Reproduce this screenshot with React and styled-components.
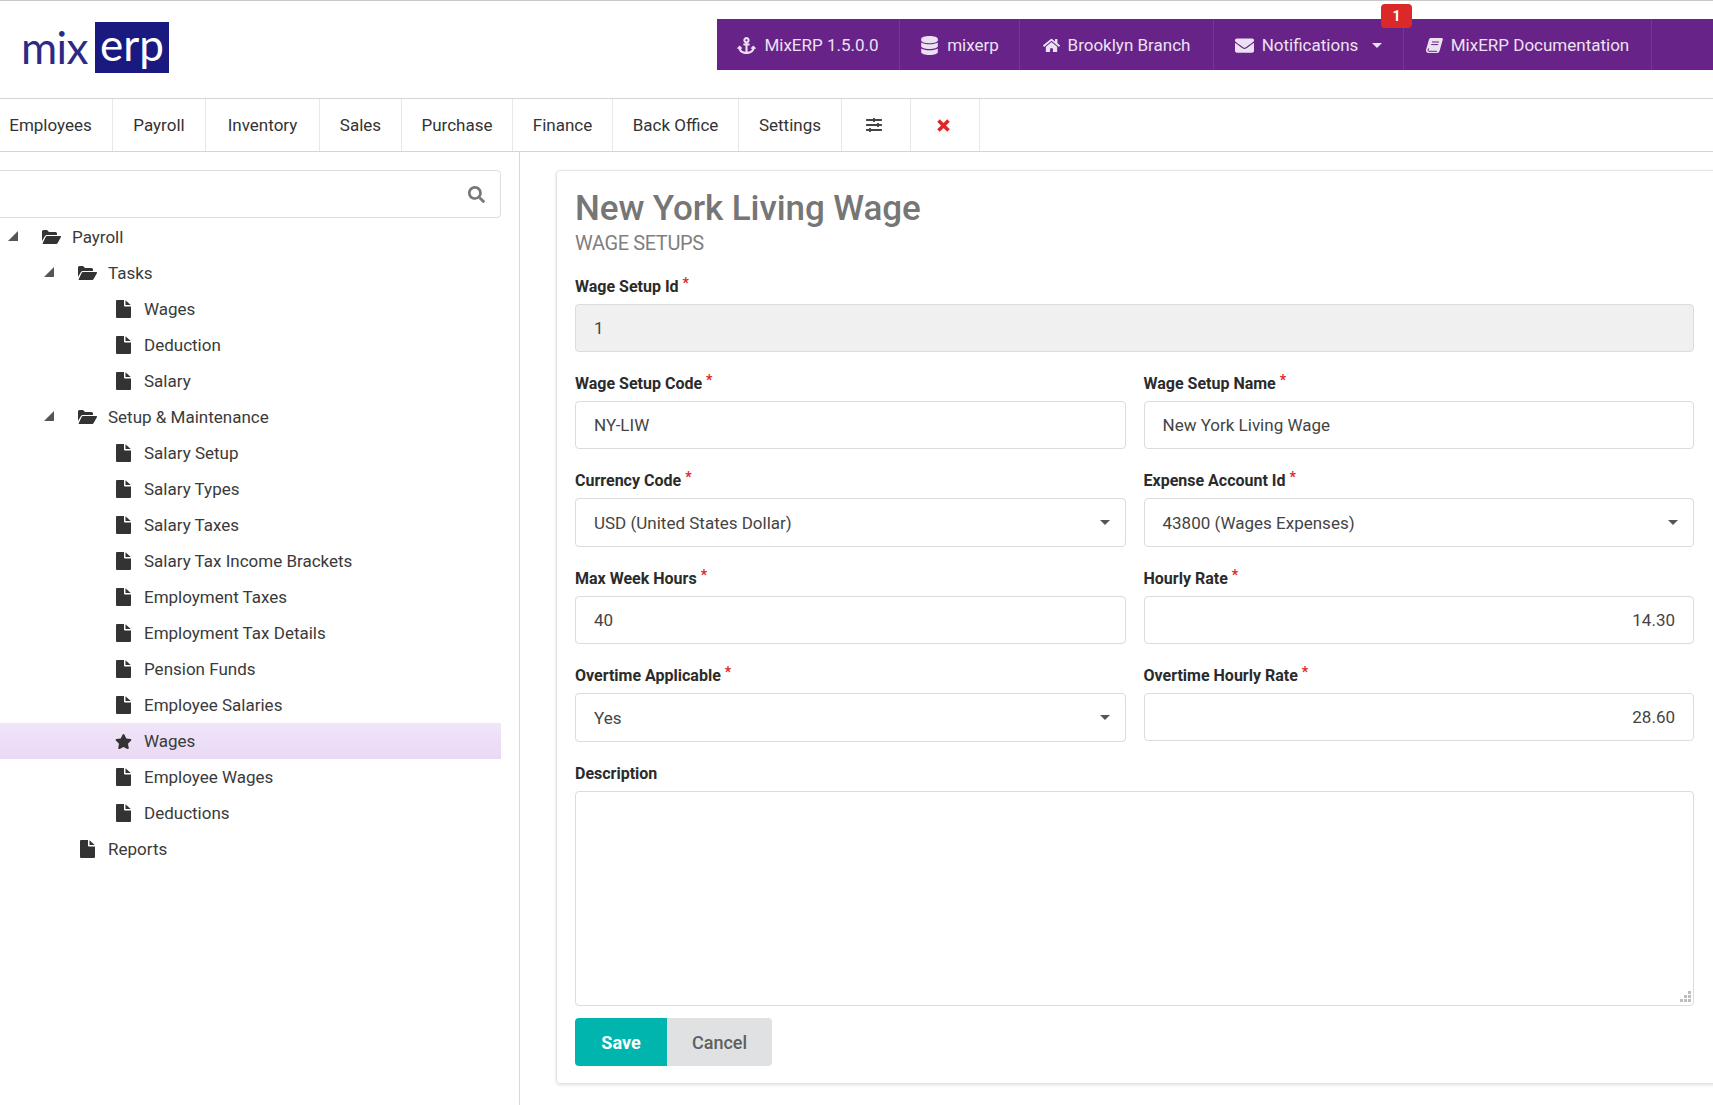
import React from "react";
import styled, { createGlobalStyle } from "styled-components";
import {
  FaAnchor,
  FaDatabase,
  FaHome,
  FaEnvelope,
  FaStar,
  FaSearch,
  FaSlidersH,
} from "react-icons/fa";

const GlobalStyle = createGlobalStyle`
  html, body {
    margin: 0;
    padding: 0;
    background: #fff;
    overflow: hidden;
  }
  * {
    box-sizing: border-box;
  }
  body {
    font-family: Roboto, "Noto Sans", sans-serif;
    font-size: 17px;
    color: #333;
  }
`;

const Page = styled.div`
  width: 1713px;
  height: 1105px;
  overflow: hidden;
  display: flex;
  flex-direction: column;
`;

const Header = styled.header`
  height: 99px;
  flex: none;
  border-top: 1px solid #c8c8c8;
  border-bottom: 1px solid #d4d4d5;
  display: flex;
  justify-content: space-between;
  align-items: flex-start;
`;

const Logo = styled.div`
  display: flex;
  align-items: center;
  margin: 21px 0 0 21px;
  font-family: Lato, "Liberation Sans", sans-serif;
  font-size: 44px;
  line-height: 51px;
`;

const LogoMix = styled.span`
  color: #2b2b85;
  width: 74px;
  letter-spacing: -0.6px;
`;

const LogoErp = styled.span`
  background: #191980;
  color: #fff;
  width: 74px;
  height: 51px;
  text-align: center;
  line-height: 44px;
`;

const TopNav = styled.nav`
  width: 996px;
  height: 51px;
  margin-top: 18px;
  background: #672388;
  display: flex;
`;

const TopItem = styled.div`
  position: relative;
  width: ${(p) => p.$w}px;
  flex: none;
  display: flex;
  align-items: center;
  justify-content: center;
  gap: 8px;
  padding-top: 1px;
  color: #ece1f2;
  font-size: 17px;
  border-right: 1px solid #76388f;
  svg {
    flex: none;
  }
`;

const Caret = styled.span`
  width: 0;
  height: 0;
  margin-left: 6px;
  border-left: 5px solid transparent;
  border-right: 5px solid transparent;
  border-top: 5px solid ${(p) => p.$color || "#ece1f2"};
`;

const Badge = styled.span`
  position: absolute;
  top: -15px;
  left: 167px;
  width: 31px;
  height: 24px;
  background: #db2828;
  border-radius: 4px;
  color: #fff;
  font-size: 14px;
  font-weight: 700;
  display: flex;
  align-items: center;
  justify-content: center;
`;

const MainMenu = styled.nav`
  height: 53px;
  flex: none;
  margin-left: -11px;
  border-bottom: 1px solid #d4d4d5;
  display: flex;
`;

const MenuItem = styled.div`
  width: ${(p) => p.$w}px;
  flex: none;
  display: flex;
  align-items: center;
  justify-content: center;
  padding-right: ${(p) => (p.$icon ? 4 : 0)}px;
  border-right: 1px solid #e8e8e8;
  color: #333;
  font-size: 17px;
  svg {
    font-size: 16px;
    color: #444;
  }
`;

const Body = styled.div`
  flex: 1;
  display: flex;
  min-height: 0;
`;

const Sidebar = styled.aside`
  width: 520px;
  flex: none;
  border-right: 1px solid #d9d9d9;
  padding: 18px 18px 0 0;
`;

const SearchBox = styled.div`
  height: 48px;
  margin-left: -20px;
  border: 1px solid #dedede;
  border-radius: 4px;
  display: flex;
  align-items: center;
  justify-content: flex-end;
  padding-right: 15px;
  color: #777;
  svg {
    font-size: 17px;
  }
`;

const Tree = styled.div`
  margin-top: 1px;
`;

const Row = styled.div`
  height: 36px;
  display: flex;
  align-items: center;
  padding-left: ${(p) => p.$indent}px;
  color: #3a3a3a;
  background: ${(p) =>
    p.$active ? "linear-gradient(#f0e5f8, #ead9f5)" : "transparent"};
`;

const Toggle = styled.svg`
  width: 10px;
  height: 10px;
  flex: none;
  margin: -3px 23px 0 0;
  fill: #555;
`;

const RowIcon = styled.span`
  width: 20px;
  margin-right: 11px;
  flex: none;
  display: flex;
  justify-content: center;
  color: #333;
  font-size: 17px;
  svg {
    display: block;
    fill: #333;
  }
`;

const Main = styled.main`
  flex: 1;
  min-width: 0;
  padding: 18px 0 0 36px;
`;

const Card = styled.section`
  width: 1170px;
  height: 914px;
  border: 1px solid #e4e4e5;
  border-radius: 4px;
  box-shadow: 0 1px 3px rgba(34, 36, 38, 0.15);
  padding: 18px 31px 0 18px;
  display: flex;
  flex-direction: column;
`;

const Title = styled.h1`
  margin: 0 0 2px;
  font-size: 35px;
  line-height: 40px;
  font-weight: 500;
  letter-spacing: -0.1px;
  color: #767676;
`;

const Subtitle = styled.div`
  font-size: 20px;
  line-height: 24px;
  letter-spacing: -0.4px;
  color: #7f7f7f;
  margin-bottom: 20px;
`;

const FormGrid = styled.div`
  display: grid;
  grid-template-columns: 1fr 1fr;
  column-gap: 18px;
  row-gap: 20px;
`;

const Field = styled.div`
  grid-column: ${(p) => (p.$wide ? "1 / -1" : "auto")};
  position: relative;
`;

const Label = styled.label`
  display: block;
  height: 22px;
  margin-bottom: 7px;
  font-size: 16px;
  line-height: 23px;
  font-weight: 700;
  color: #2b2b2b;
`;

const Required = styled.span`
  color: #db2828;
  font-size: 14px;
  margin-left: 4px;
  position: relative;
  top: -4px;
`;

const Input = styled.input`
  display: block;
  width: 100%;
  height: 48px;
  padding: 0 18px;
  border: 1px solid #dcdcdd;
  border-radius: 4px;
  font: inherit;
  font-size: 17px;
  color: #444;
  outline: none;
  text-align: ${(p) => (p.$right ? "right" : "left")};
  background: ${(p) => (p.readOnly ? "#f0f0f0" : "#fff")};
`;

const Select = styled.div`
  height: 49px;
  padding: 0 15px 0 18px;
  border: 1px solid #dcdcdd;
  border-radius: 4px;
  display: flex;
  align-items: center;
  justify-content: space-between;
  font-size: 17px;
  color: #444;
`;

const TextArea = styled.textarea`
  display: block;
  width: 100%;
  height: 215px;
  border: 1px solid #dcdcdd;
  border-radius: 4px;
  resize: none;
  outline: none;
`;

const Grip = styled.svg`
  position: absolute;
  right: 3px;
  bottom: 3px;
  width: 12px;
  height: 12px;
  fill: #bdbdbd;
`;

const Buttons = styled.div`
  display: flex;
  margin-top: 12px;
`;

const Button = styled.button`
  width: ${(p) => (p.$primary ? 92 : 105)}px;
  height: 48px;
  border: 0;
  font: inherit;
  font-size: 18px;
  font-weight: ${(p) => (p.$primary ? 700 : 500)};
  color: ${(p) => (p.$primary ? "#fff" : "#5f5f60")};
  background: ${(p) => (p.$primary ? "#00b5ad" : "#e0e1e2")};
  border-radius: ${(p) => (p.$primary ? "4px 0 0 4px" : "0 4px 4px 0")};
`;

const tabs = [
  ["Employees", 124],
  ["Payroll", 93],
  ["Inventory", 114],
  ["Sales", 82],
  ["Purchase", 111],
  ["Finance", 100],
  ["Back Office", 126],
  ["Settings", 103],
];

const tree = [
  { name: "Payroll", indent: 8, open: true },
  { name: "Tasks", indent: 44, open: true },
  { name: "Wages", indent: 113 },
  { name: "Deduction", indent: 113 },
  { name: "Salary", indent: 113 },
  { name: "Setup & Maintenance", indent: 44, open: true },
  { name: "Salary Setup", indent: 113 },
  { name: "Salary Types", indent: 113 },
  { name: "Salary Taxes", indent: 113 },
  { name: "Salary Tax Income Brackets", indent: 113 },
  { name: "Employment Taxes", indent: 113 },
  { name: "Employment Tax Details", indent: 113 },
  { name: "Pension Funds", indent: 113 },
  { name: "Employee Salaries", indent: 113 },
  { name: "Wages", indent: 113, active: true },
  { name: "Employee Wages", indent: 113 },
  { name: "Deductions", indent: 113 },
  { name: "Reports", indent: 77 },
];

// the FontAwesome 4 shapes in the picture differ from the package's FA5 ones
const FileIcon = () => (
  <svg width="15" height="18" viewBox="0 0 15 18">
    <path d="M1 0H8V5.5Q8 6.5 9 6.5H15V17Q15 18 14 18H1Q0 18 0 17V1Q0 0 1 0Z" />
    <path d="M9.5 0.3L14.7 5H9.5Z" />
  </svg>
);

const FolderIcon = () => (
  <svg width="19" height="14" viewBox="0 0 19 14">
    <path d="M0 1.5Q0 0 1.5 0H5L7 2H13.5Q15 2 15 3.5V5H5Q3.5 5 2.8 6.2L0 11Z" />
    <path d="M5 6H18Q19.5 6 19 7L15.8 12.8Q15.2 14 14 14H1.5Q0.3 14 0.8 13L3.6 7Q4 6 5 6Z" />
  </svg>
);

const BookIcon = () => (
  <svg width="17" height="15" viewBox="0 0 17 15">
    <path
      fill="#ece1f2"
      d="M4.5 0H15.5Q17.3 0 16.8 1.6L13.7 12.5Q13.2 15 10.8 15H2.5Q0 15 0 12.3Q0 11.6 0.3 10.7L3 1.5Q3.4 0 4.5 0Z"
    />
    <path
      fill="none"
      stroke="#672388"
      strokeWidth="1"
      d="M6 4H13M5.2 6.6H12.2M2.6 10.5Q1 13 3 13.3H11"
    />
  </svg>
);

const RemoveIcon = () => (
  <svg width="13" height="13" viewBox="0 0 13 13">
    <path fill="none" stroke="#db2828" strokeWidth="3.6" d="M1.5 1.5L11.5 11.5M11.5 1.5L1.5 11.5" />
  </svg>
);

function FieldLabel({ text, required = true }) {
  return (
    <Label>
      {text}
      {required && <Required>*</Required>}
    </Label>
  );
}

function SelectField({ label, value }) {
  return (
    <Field>
      <FieldLabel text={label} />
      <Select>
        {value}
        <Caret $color="#555" />
      </Select>
    </Field>
  );
}

function InputField({ label, value, right }) {
  return (
    <Field>
      <FieldLabel text={label} />
      <Input defaultValue={value} $right={right} />
    </Field>
  );
}

function TreeIcon({ item }) {
  if (item.open) return <FolderIcon />;
  if (item.active) return <FaStar />;
  return <FileIcon />;
}

export default function App() {
  return (
    <Page>
      <GlobalStyle />
      <Header>
        <Logo>
          <LogoMix>mix</LogoMix>
          <LogoErp>erp</LogoErp>
        </Logo>
        <TopNav>
          <TopItem $w={183}>
            <FaAnchor size={19} />
            MixERP 1.5.0.0
          </TopItem>
          <TopItem $w={120}>
            <FaDatabase size={19} />
            mixerp
          </TopItem>
          <TopItem $w={194}>
            <FaHome size={17} />
            Brooklyn Branch
          </TopItem>
          <TopItem $w={190}>
            <FaEnvelope size={19} />
            Notifications
            <Caret />
            <Badge>1</Badge>
          </TopItem>
          <TopItem $w={248}>
            <BookIcon />
            MixERP Documentation
          </TopItem>
        </TopNav>
      </Header>
      <MainMenu>
        {tabs.map(([name, w]) => (
          <MenuItem key={name} $w={w}>
            {name}
          </MenuItem>
        ))}
        <MenuItem $w={69} $icon>
          <FaSlidersH />
        </MenuItem>
        <MenuItem $w={69} $icon>
          <RemoveIcon />
        </MenuItem>
      </MainMenu>
      <Body>
        <Sidebar>
          <SearchBox>
            <FaSearch />
          </SearchBox>
          <Tree>
            {tree.map((item, i) => (
              <Row key={i} $indent={item.indent} $active={item.active}>
                {item.open && (
                  <Toggle viewBox="0 0 10 10">
                    <path d="M10 0V10H0Z" />
                  </Toggle>
                )}
                <RowIcon>
                  <TreeIcon item={item} />
                </RowIcon>
                {item.name}
              </Row>
            ))}
          </Tree>
        </Sidebar>
        <Main>
          <Card>
            <Title>New York Living Wage</Title>
            <Subtitle>WAGE SETUPS</Subtitle>
            <FormGrid>
              <Field $wide>
                <FieldLabel text="Wage Setup Id" />
                <Input defaultValue="1" readOnly />
              </Field>
              <InputField label="Wage Setup Code" value="NY-LIW" />
              <InputField label="Wage Setup Name" value="New York Living Wage" />
              <SelectField label="Currency Code" value="USD (United States Dollar)" />
              <SelectField label="Expense Account Id" value="43800 (Wages Expenses)" />
              <InputField label="Max Week Hours" value="40" />
              <InputField label="Hourly Rate" value="14.30" right />
              <SelectField label="Overtime Applicable" value="Yes" />
              <InputField label="Overtime Hourly Rate" value="28.60" right />
              <Field $wide>
                <FieldLabel text="Description" required={false} />
                <TextArea />
                <Grip viewBox="0 0 12 12">
                  <path d="M9 0h3v3H9zM5 4h3v3H5zM9 4h3v3H9zM1 8h3v3H1zM5 8h3v3H5zM9 8h3v3H9z" />
                </Grip>
              </Field>
            </FormGrid>
            <Buttons>
              <Button $primary>Save</Button>
              <Button>Cancel</Button>
            </Buttons>
          </Card>
        </Main>
      </Body>
    </Page>
  );
}
